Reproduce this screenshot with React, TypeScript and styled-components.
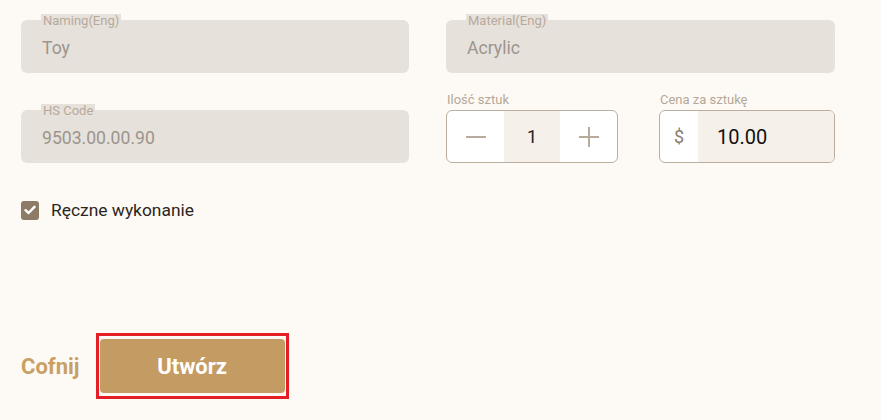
import styled, { createGlobalStyle } from "styled-components";

const GlobalStyle = createGlobalStyle`
  body {
    margin: 0;
    background: #fdfaf6;
    font-family: Roboto, "Liberation Sans", Arial, sans-serif;
  }
`;

const MinusIcon = () => (
  <svg width="22" height="22" viewBox="0 0 22 22">
    <line x1="1" y1="11" x2="21" y2="11" stroke="#b8ab9b" strokeWidth="2" />
  </svg>
);

const PlusIcon = () => (
  <svg width="22" height="22" viewBox="0 0 22 22">
    <line x1="1" y1="11" x2="21" y2="11" stroke="#b8ab9b" strokeWidth="2" />
    <line x1="11" y1="1" x2="11" y2="21" stroke="#b8ab9b" strokeWidth="2" />
  </svg>
);

const CheckIcon = () => (
  <svg width="12" height="10" viewBox="0 0 12 10">
    <path
      d="M1.5 5.2 L4.6 8 L10.5 1.8"
      fill="none"
      stroke="#fff"
      strokeWidth="2.4"
      strokeLinecap="round"
      strokeLinejoin="round"
    />
  </svg>
);

const App = () => {
  return (
    <Page>
      <GlobalStyle />

      <Row>
        <Field>
          <FloatLabel>Naming(Eng)</FloatLabel>
          <FieldValue>Toy</FieldValue>
        </Field>
        <Field>
          <FloatLabel>Material(Eng)</FloatLabel>
          <FieldValue>Acrylic</FieldValue>
        </Field>
      </Row>

      <Row $top={20}>
        <Field>
          <FloatLabel>HS Code</FloatLabel>
          <FieldValue>9503.00.00.90</FieldValue>
        </Field>

        <Inline>
          <Group>
            <SmallLabel>Ilość sztuk</SmallLabel>
            <Stepper>
              <StepButton>
                <MinusIcon />
              </StepButton>
              <StepValue>1</StepValue>
              <StepButton>
                <PlusIcon />
              </StepButton>
            </Stepper>
          </Group>

          <Group>
            <SmallLabel>Cena za sztukę</SmallLabel>
            <PriceBox>
              <Currency>$</Currency>
              <PriceValue>10.00</PriceValue>
            </PriceBox>
          </Group>
        </Inline>
      </Row>

      <CheckRow>
        <CheckBox>
          <CheckIcon />
        </CheckBox>
        <CheckText>Ręczne wykonanie</CheckText>
      </CheckRow>

      <Actions>
        <BackLink>Cofnij</BackLink>
        <Highlight>
          <SubmitButton>Utwórz</SubmitButton>
        </Highlight>
      </Actions>
    </Page>
  );
};

export default App;

const Page = styled.div`
  width: 881px;
  height: 420px;
  box-sizing: border-box;
  padding: 20px 46px 0 21px;
  overflow: hidden;
`;

const Row = styled.div<{ $top?: number }>`
  display: grid;
  grid-template-columns: 388px 389px;
  column-gap: 37px;
  align-items: end;
  margin-top: ${({ $top }) => $top ?? 0}px;
`;

const Field = styled.div`
  position: relative;
  height: 53px;
  border-radius: 6px;
  background: #e6e1db;
  display: flex;
  align-items: center;
  padding-left: 21px;
  padding-top: 2px;
  box-sizing: border-box;
`;

const FloatLabel = styled.span`
  position: absolute;
  top: -6px;
  left: 20px;
  padding: 0 2px;
  background: #e6e1db;
  color: #b7aa9b;
  font-size: 13px;
  line-height: 14px;
`;

const FieldValue = styled.span`
  color: #9c958d;
  font-size: 17.6px;
`;

const Inline = styled.div`
  display: flex;
  gap: 41px;
`;

const Group = styled.div`
  display: flex;
  flex-direction: column;
`;

const SmallLabel = styled.span`
  height: 17px;
  color: #b5a898;
  font-size: 13px;
  line-height: 14px;
  padding-left: 1px;
`;

const Stepper = styled.div`
  width: 172px;
  height: 53px;
  box-sizing: border-box;
  display: grid;
  grid-template-columns: 57px 56px 1fr;
  border: 1px solid #bcae9f;
  border-radius: 6px;
  overflow: hidden;
  background: #fff;
`;

const StepButton = styled.div`
  display: flex;
  align-items: center;
  justify-content: center;
`;

const StepValue = styled.div`
  display: flex;
  align-items: center;
  justify-content: center;
  background: #f5f1ea;
  color: #222;
  font-size: 18px;
`;

const PriceBox = styled.div`
  width: 176px;
  height: 53px;
  box-sizing: border-box;
  display: flex;
  border: 1px solid #bcae9f;
  border-radius: 6px;
  overflow: hidden;
  background: #fff;
`;

const Currency = styled.div`
  width: 38px;
  display: flex;
  align-items: center;
  justify-content: center;
  color: #8a7d6e;
  font-size: 18px;
`;

const PriceValue = styled.div`
  flex: 1;
  display: flex;
  align-items: center;
  padding-left: 19px;
  background: #f5f1ea;
  color: #111;
  font-size: 20px;
`;

const CheckRow = styled.div`
  display: flex;
  align-items: center;
  gap: 12px;
  margin-top: 37px;
`;

const CheckBox = styled.div`
  width: 18px;
  height: 19px;
  border-radius: 3px;
  background: #8c7b66;
  display: flex;
  align-items: center;
  justify-content: center;
`;

const CheckText = styled.span`
  color: #2b2520;
  font-size: 17.4px;
`;

const Actions = styled.div`
  display: flex;
  align-items: center;
  gap: 16px;
  margin-top: 113px;
`;

const BackLink = styled.span`
  color: #c9a063;
  font-size: 22px;
  font-weight: 700;
`;

const Highlight = styled.div`
  border: 3px solid #e31e24;
  padding: 3px 1px;
`;

const SubmitButton = styled.button`
  width: 185px;
  height: 54px;
  border: none;
  border-radius: 4px;
  background: #c49c63;
  color: #fff;
  font-family: Roboto, "Liberation Sans", Arial, sans-serif;
  font-size: 22px;
  font-weight: 700;
  cursor: pointer;
`;
